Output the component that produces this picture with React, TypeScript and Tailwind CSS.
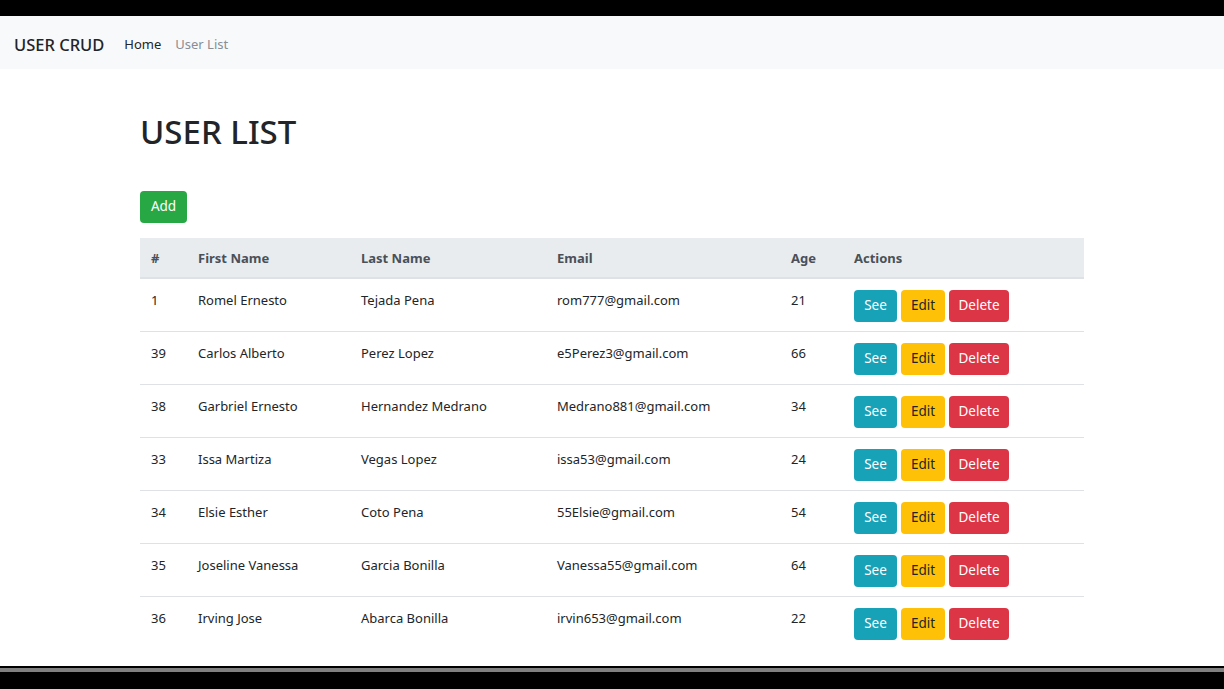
import React from "react";

const users = [
  { id: 1, first: "Romel Ernesto", last: "Tejada Pena", email: "rom777@gmail.com", age: 21 },
  { id: 39, first: "Carlos Alberto", last: "Perez Lopez", email: "e5Perez3@gmail.com", age: 66 },
  { id: 38, first: "Garbriel Ernesto", last: "Hernandez Medrano", email: "Medrano881@gmail.com", age: 34 },
  { id: 33, first: "Issa Martiza", last: "Vegas Lopez", email: "issa53@gmail.com", age: 24 },
  { id: 34, first: "Elsie Esther", last: "Coto Pena", email: "55Elsie@gmail.com", age: 54 },
  { id: 35, first: "Joseline Vanessa", last: "Garcia Bonilla", email: "Vanessa55@gmail.com", age: 64 },
  { id: 36, first: "Irving Jose", last: "Abarca Bonilla", email: "irvin653@gmail.com", age: 22 },
];

export default function App() {
  return (
    <div className="w-[1224px] h-[689px] bg-black flex flex-col font-['Noto_Sans',sans-serif] text-[#212529] overflow-hidden">
      <div className="h-[16px] shrink-0" />
      <div className="flex-1 bg-white flex flex-col">
        {/* Navbar */}
        <nav className="h-[53px] bg-[#f8f9fa] flex items-center px-[14px] pt-[5px]">
          <span className="text-[16.5px] font-medium mr-[20px] text-[#212529]">USER CRUD</span>
          <a className="text-[13px] text-[#212529] mr-[14px]">Home</a>
          <a className="text-[13px] text-[#868e96]">User List</a>
        </nav>

        <div className="w-[944px] ml-[140px] flex flex-col">
          <h1 className="text-[33px] font-medium leading-[1.2] mt-[43px] mb-[39px]">USER LIST</h1>
          <div>
            <button className="bg-[#28a745] text-white text-[13.5px] h-[32px] w-[47px] rounded-[4px]">Add</button>
          </div>

          <table className="mt-[15px] w-full text-[13px] border-collapse">
            <thead>
              <tr className="bg-[#e9ecef] border-b-2 border-[#dee2e6]">
                <th className="w-[47px] text-left font-bold text-[#495057] px-[11px] pt-[11px] pb-[9px] leading-[19px]">#</th>
                <th className="w-[163px] text-left font-bold text-[#495057] px-[11px] pt-[11px] pb-[9px] leading-[19px]">First Name</th>
                <th className="w-[196px] text-left font-bold text-[#495057] px-[11px] pt-[11px] pb-[9px] leading-[19px]">Last Name</th>
                <th className="w-[234px] text-left font-bold text-[#495057] px-[11px] pt-[11px] pb-[9px] leading-[19px]">Email</th>
                <th className="w-[63px] text-left font-bold text-[#495057] px-[11px] pt-[11px] pb-[9px] leading-[19px]">Age</th>
                <th className="text-left font-bold text-[#495057] px-[11px] pt-[11px] pb-[9px] leading-[19px]">Actions</th>
              </tr>
            </thead>
            <tbody>
              {users.map((u, i) => (
                <tr key={u.id} className={i > 0 ? "border-t border-[#dee2e6]" : ""}>
                  <td className="align-top px-[11px] pt-[11px] leading-[21px]">{u.id}</td>
                  <td className="align-top px-[11px] pt-[11px] leading-[21px]">{u.first}</td>
                  <td className="align-top px-[11px] pt-[11px] leading-[21px]">{u.last}</td>
                  <td className="align-top px-[11px] pt-[11px] leading-[21px]">{u.email}</td>
                  <td className="align-top px-[11px] pt-[11px] leading-[21px]">{u.age}</td>
                  <td className="align-top px-[11px] pt-[11px] pb-[9px] text-[13.5px]">
                    <div className="flex gap-[4px]">
                      <button className="bg-[#17a2b8] text-white h-[32px] w-[43px] rounded-[4px]">See</button>
                      <button className="bg-[#ffc107] text-[#212529] h-[32px] w-[44px] rounded-[4px]">Edit</button>
                      <button className="bg-[#dc3545] text-white h-[32px] w-[60px] rounded-[4px]">Delete</button>
                    </div>
                  </td>
                </tr>
              ))}
            </tbody>
          </table>
        </div>
      </div>
      <div className="h-[2px] bg-black shrink-0" />
      <div className="h-[4px] bg-[#808080] shrink-0" />
      <div className="h-[17px] bg-black shrink-0" />
    </div>
  );
}
